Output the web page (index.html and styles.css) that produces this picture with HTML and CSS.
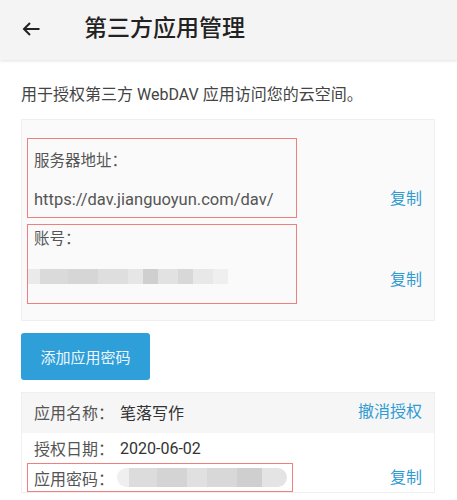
FILE: index.html
```html
<!DOCTYPE html>
<html lang="zh-CN">
<head>
<meta charset="utf-8">
<title>第三方应用管理</title>
<link rel="stylesheet" href="styles.css">
</head>
<body>
<header class="topbar">
  <svg class="back" width="18" height="14" viewBox="0 0 18 14"><path d="M17.5 7H2 M8 1L2 7l6 6" fill="none" stroke="#222" stroke-width="2"/></svg>
  <h1 class="title">第三方应用管理</h1>
</header>
<main class="content">
  <p class="desc">用于授权第三方 WebDAV 应用访问您的云空间。</p>
  <section class="panel">
    <div class="row">
      <div class="mark mark-first">
        <div class="label">服务器地址：</div>
        <div class="value">https://dav.jianguoyun.com/dav/</div>
      </div>
      <a class="link link-first">复制</a>
    </div>
    <div class="row">
      <div class="mark mark-second">
        <div class="label">账号：</div>
        <div class="mosaic"></div>
      </div>
      <a class="link link-second">复制</a>
    </div>
  </section>
  <button class="btn">添加应用密码</button>
  <section class="app">
    <div class="app-head">
      <span class="k">应用名称：</span><span class="v">笔落写作</span>
      <a class="link push">撤消授权</a>
    </div>
    <div class="app-line">
      <span class="k">授权日期：</span><span class="v">2020-06-02</span>
    </div>
    <div class="app-last">
      <div class="mark mark-pwd">
        <span class="k">应用密码：</span><span class="pill"></span>
      </div>
      <a class="link push">复制</a>
    </div>
  </section>
</main>
</body>
</html>
```

FILE: styles.css
```css
html, body {
  margin: 0;
  padding: 0;
  background: #fff;
  font-family: Roboto, "Noto Sans CJK SC", sans-serif;
  color: #555;
}
.topbar {
  height: 60px;
  background: #f4f4f4;
  box-shadow: 0 1px 3px rgba(0,0,0,0.12);
  display: flex;
  align-items: center;
  padding-left: 22px;
  box-sizing: border-box;
}
.back {
  display: block;
  margin-top: -3px;
}
.title {
  margin: 0 0 0 44px;
  font-size: 23px;
  font-weight: 500;
  color: #222;
  line-height: 1;
  margin-top: -3px;
}
.content {
  padding: 0 22px 0 21px;
}
.desc {
  margin: 0;
  padding-top: 24px;
  font-size: 16px;
  line-height: 22px;
  color: #444;
}
.panel {
  margin-top: 13px;
  background: #fafafa;
  border: 1px solid #efefef;
  padding: 18px 12px 16px 5px;
  display: flex;
  flex-direction: column;
  gap: 6px;
}
.row {
  display: flex;
  justify-content: space-between;
}
.mark {
  border: 1.5px solid #f08080;
  box-sizing: border-box;
  width: 270px;
}
.mark-first {
  height: 80px;
  padding: 11px 0 0 6px;
}
.mark-second {
  height: 80px;
  padding: 3px 0 0 6px;
}
.label {
  font-size: 15.5px;
  line-height: 22px;
  color: #555;
}
.value {
  margin-top: 17px;
  font-size: 16.5px;
  line-height: 22px;
  color: #555;
}
.mosaic {
  margin: 19px 0 0 -6px;
  width: 200px;
  height: 15px;
  background: linear-gradient(90deg,
    #eaeaea 0 12px, #dadada 12px 40px, #d6d6d6 40px 70px, #dedede 70px 100px,
    #e6e6e6 100px 115px, #cfcfcf 115px 130px, #e2e2e2 130px 150px,
    #d8d8d8 150px 165px, #e8e8e8 165px 185px, #efefef 185px 200px);
}
.link {
  color: #2f9bd3;
  font-size: 16px;
  line-height: 22px;
  align-self: flex-end;
  white-space: nowrap;
}
.link-first { margin-bottom: 8px; }
.link-second { margin-bottom: 13px; }
.btn {
  display: block;
  margin-top: 12px;
  width: 129px;
  height: 47px;
  border: 0;
  border-radius: 3px;
  background: #2f9fd9;
  color: #eef7fc;
  font-family: Roboto, "Noto Sans CJK SC", sans-serif;
  font-size: 15px;
  padding: 0;
}
.app {
  margin-top: 12px;
  border: 1px solid #efefef;
  background: #fff;
}
.app-head {
  height: 40px;
  background: #f6f6f6;
  display: flex;
  align-items: center;
  padding: 0 12px 2px 12px;
  box-sizing: border-box;
}
.app-line {
  height: 30px;
  display: flex;
  align-items: center;
  padding: 0 12px;
}
.app-last {
  display: flex;
  align-items: center;
  padding: 0 12px 0 5px;
}
.k {
  font-size: 16px;
  color: #555;
  white-space: nowrap;
}
.v {
  font-size: 16px;
  color: #333;
  margin-left: 6px;
}
.push {
  margin-left: auto;
  align-self: center;
}
.mark-pwd {
  width: 266px;
  height: 29px;
  display: flex;
  align-items: center;
  padding-left: 6px;
}
.pill {
  flex: 0 0 170px;
  margin-left: 3px;
  height: 19px;
  border-radius: 10px;
  background: linear-gradient(90deg,
    #efefef 0 12px, #dcdcdc 12px 40px, #d4d4d4 40px 70px, #e0e0e0 70px 90px,
    #d8d8d8 90px 120px, #cfcfcf 120px 145px, #e4e4e4 145px 170px);
}
```
